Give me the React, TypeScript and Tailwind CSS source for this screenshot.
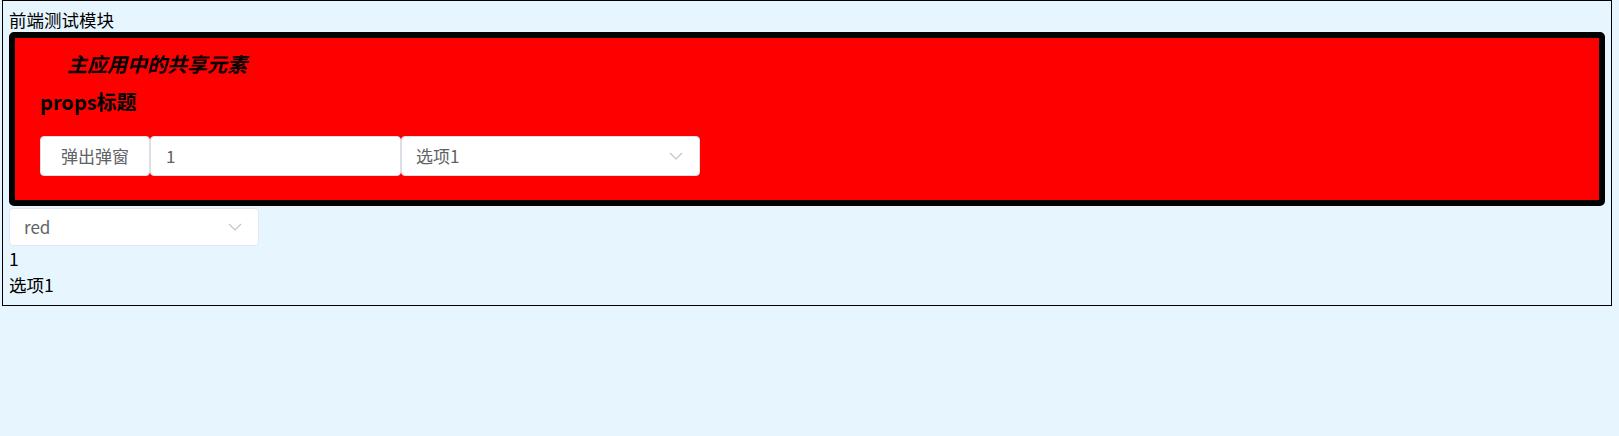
import React from 'react'

function Chevron() {
  return (
    <svg width="14" height="8" viewBox="0 0 14 8" fill="none" aria-hidden="true">
      <polyline points="1,1 7,7 13,1" stroke="#c0c4cc" strokeWidth="1.2" />
    </svg>
  )
}

function SelectBox({ value, className }: { value: string; className: string }) {
  return (
    <div
      className={`flex items-center justify-between rounded-[4px] bg-white pl-[14px] pr-[16px] text-[17px] text-[#606266] ${className}`}
    >
      <span>{value}</span>
      <Chevron />
    </div>
  )
}

export default function App() {
  return (
    <div className="min-h-screen bg-[#e7f6fe] font-['Noto_Sans_CJK_SC','Noto_Sans',sans-serif] text-black">
      <div className="ml-[2px] w-[1610px] border border-black px-[6px] pt-[7px] pb-[7px]">
        <div className="h-[24px] text-[17.5px] leading-[24px]">前端测试模块</div>

        {/* shared element from main app */}
        <div className="h-[174px] rounded-[5px] border-[6px] border-black bg-[#ff0000] pl-[25px]">
          <div className="pt-[13px] pl-[27px] text-[20px] leading-[26px] font-bold italic">
            主应用中的共享元素
          </div>
          <div className="mt-[12px] text-[20px] leading-[26px] font-bold">props标题</div>
          <div className="mt-[21px] flex h-[40px]">
            <button className="w-[110px] rounded-[4px] border border-[#dcdfe6] bg-white text-[17px] text-[#606266]">
              弹出弹窗
            </button>
            <div className="flex w-[251px] items-center rounded-[4px] border border-[#dcdfe6] bg-white pl-[15px] text-[17px] text-[#606266]">
              1
            </div>
            <SelectBox value="选项1" className="w-[299px] border border-[#dcdfe6]" />
          </div>
        </div>

        <SelectBox value="red" className="mt-[2px] h-[38px] w-[250px] border border-[#e4e7ed]" />
        <div className="h-[26px] text-[17.5px] leading-[26px]">1</div>
        <div className="h-[26px] text-[17.5px] leading-[26px]">选项1</div>
      </div>
    </div>
  )
}
